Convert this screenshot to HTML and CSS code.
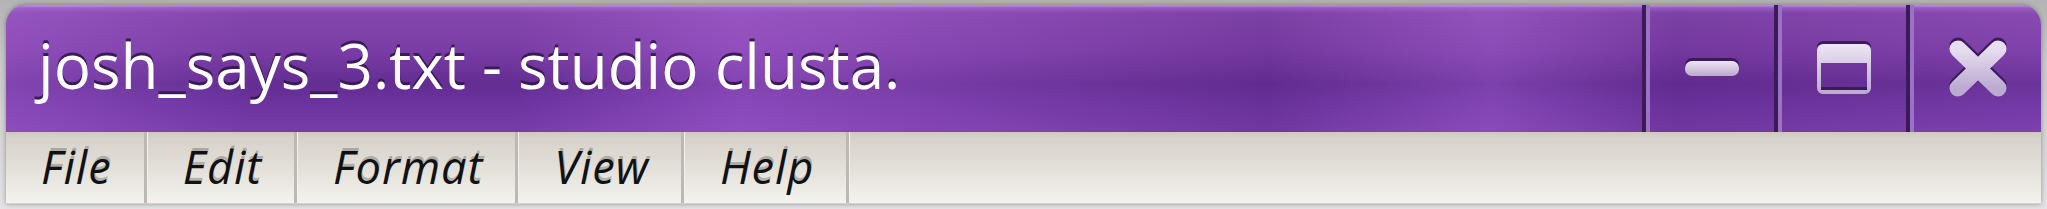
FILE: index.html
```html
<!DOCTYPE html>
<html>
<head>
<meta charset="utf-8">
<link rel="stylesheet" href="styles.css">
</head>
<body>
<div class="window">
  <div class="titlebar">
    <div class="title">josh_says_3.txt - studio clusta.</div>
    <div class="controls">
      <div class="btn btn-min">
        <svg width="60" height="24" viewBox="0 0 60 24">
          <defs>
            <linearGradient id="g1" x1="0" y1="0" x2="0" y2="1">
              <stop offset="0" stop-color="#ece6f4"/>
              <stop offset="1" stop-color="#bba9cf"/>
            </linearGradient>
          </defs>
          <rect x="3" y="2" width="54" height="15" rx="7" fill="#3b1a5c"/>
          <rect x="3" y="5" width="54" height="15" rx="7" fill="url(#g1)"/>
        </svg>
      </div>
      <div class="btn btn-max">
        <svg width="60" height="58" viewBox="0 0 60 58">
          <defs>
            <linearGradient id="g2" x1="0" y1="0" x2="0" y2="1">
              <stop offset="0" stop-color="#ece6f4"/>
              <stop offset="1" stop-color="#bba9cf"/>
            </linearGradient>
          </defs>
          <path fill-rule="evenodd" fill="#3b1a5c" d="M9 2h42a6 6 0 0 1 6 6v38a6 6 0 0 1-6 6h-42a6 6 0 0 1-6-6v-38a6 6 0 0 1 6-6zM7 21v27h46v-27z"/>
          <path fill-rule="evenodd" fill="url(#g2)" d="M9 5h42a6 6 0 0 1 6 6v38a6 6 0 0 1-6 6h-42a6 6 0 0 1-6-6v-38a6 6 0 0 1 6-6zM7 24v27h46v-27z"/>
        </svg>
      </div>
      <div class="btn btn-close">
        <svg width="66" height="66" viewBox="0 0 66 66">
          <defs>
            <linearGradient id="g3" x1="0" y1="0" x2="0" y2="1">
              <stop offset="0" stop-color="#e6def0"/>
              <stop offset="1" stop-color="#bcaad0"/>
            </linearGradient>
          </defs>
          <g stroke="#3b1a5c" stroke-width="17" stroke-linecap="round" fill="none">
            <path d="M13 11L53 50M53 11L13 50"/>
          </g>
          <g stroke="url(#g3)" stroke-width="17" stroke-linecap="round" fill="none">
            <path d="M13 14L53 53M53 14L13 53"/>
          </g>
        </svg>
      </div>
    </div>
  </div>
  <div class="menubar">
    <div class="menu-item first">File</div>
    <div class="menu-item">Edit</div>
    <div class="menu-item">Format</div>
    <div class="menu-item">View</div>
    <div class="menu-item">Help</div>
  </div>
</div>
</body>
</html>
```
FILE: styles.css
```css
html, body {
  margin: 0;
  padding: 0;
}
body {
  width: 2047px;
  height: 209px;
  overflow: hidden;
  background: linear-gradient(180deg, #b3b3b3 0px, #c9c9c9 60px, #d8d8da 150px, #e4e4e6 209px);
}
.window {
  margin: 5px 6px 0 6px;
  border-radius: 20px 20px 0 0;
  overflow: hidden;
  box-shadow: 0 0 5px rgba(0,0,0,0.35);
}
.titlebar {
  height: 127px;
  display: flex;
  align-items: stretch;
  background:
    linear-gradient(180deg, rgba(200,150,230,0.9) 0px, rgba(170,110,210,0.5) 3px, rgba(150,90,200,0) 8px),
    linear-gradient(90deg, rgba(175,105,220,0.4) 0%, rgba(170,100,215,0) 12%, rgba(170,100,215,0) 25%, rgba(180,105,225,0.4) 36%, rgba(80,30,120,0.15) 62%, rgba(180,110,225,0.3) 73%, rgba(80,30,120,0.15) 82%, rgba(180,110,225,0.1) 100%),
    linear-gradient(180deg, #8549ad 0%, #7a3da5 35%, #632d92 62%, #6d34a0 80%, #773ca8 100%);
}
.title {
  flex: 1;
  padding-left: 32px;
  display: flex;
  align-items: center;
  padding-bottom: 8px;
  font-family: "Open Sans", "Noto Sans", sans-serif;
  font-size: 62px;
  color: #ffffff;
  text-shadow: 0 -3px 0 #3a1a58;
  white-space: nowrap;
}
.controls {
  display: flex;
}
.btn {
  display: flex;
  align-items: center;
  justify-content: center;
  border-left: 4px solid #3a1b58;
  box-shadow: inset 4px 0 0 #9c72c4;
  padding-left: 4px;
  padding-bottom: 2px;
}
.btn-min { width: 124px; }
.btn-max { width: 124px; }
.btn-close { width: 127px; }
.menubar {
  height: 71px;
  display: flex;
  background: linear-gradient(180deg, #cdc9c0 0px, #d7d3cb 6px, #e0ddd6 30px, #eceae4 55px, #f5f3ef 71px);
  border-bottom: 1px solid #d2d2d4;
}
.menu-item {
  display: flex;
  align-items: center;
  padding: 0 32px 2px 36px;
  font-family: "Open Sans", "Noto Sans", sans-serif;
  font-style: italic;
  font-size: 45px;
  letter-spacing: 1px;
  color: #111111;
  text-shadow: 1px -3px 0 rgba(0,0,0,0.22);
  border-right: 3px solid #bcb9b3;
  box-shadow: 1px 0 0 #f4f2ee;
}
.menu-item.first {
  padding-left: 35px;
}
```
